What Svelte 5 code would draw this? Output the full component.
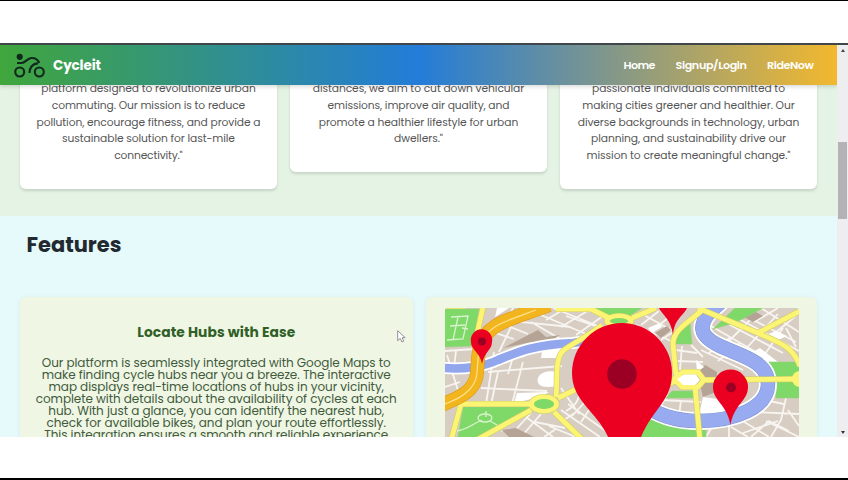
<script>
  const nav = [['Home', 32], ['Signup/Login', 71.5], ['RideNow', 47]];
  const cards = [
    [['platform designed to revolutionize urban', 214.5], ['commuting. Our mission is to reduce', 193.5], ['pollution, encourage fitness, and provide a', 224], ['sustainable solution for last-mile', 173], ['connectivity."', 68.5]],
    [['distances, we aim to cut down vehicular', 211.5], ['emissions, improve air quality, and', 182], ['promote a healthier lifestyle for urban', 199.5], ['dwellers."', 49]],
    [['passionate individuals committed to', 193], ['making cities greener and healthier. Our', 212.5], ['diverse backgrounds in technology, urban', 221.5], ['planning, and sustainability drive our', 195], ['mission to create meaningful change."', 204]]
  ];
  const feature = [
    ['Our platform is seamlessly integrated with Google Maps to', 349],
    ['make finding cycle hubs near you a breeze. The interactive', 349],
    ['map displays real-time locations of hubs in your vicinity,', 335.5],
    ['complete with details about the availability of cycles at each', 361],
    ['hub. With just a glance, you can identify the nearest hub,', 336],
    ['check for available bikes, and plan your route effortlessly.', 339.5],
    ['This integration ensures a smooth and reliable experience', 344]
  ];
  // Spread the letters of a line so it fills the given measure.
  function fit(node, width) {
    const natural = node.getBoundingClientRect().width;
    const n = node.textContent.length;
    const gap = (width - natural) / (n - 1);
    node.style.letterSpacing = gap + 'px';
    node.style.marginRight = -gap + 'px';
  }
</script>

<div class="screen">
  <div class="browser">
    <div class="page">
      <header>
        <svg class="logo" width="34" height="28" viewBox="0 0 34 28" fill="none" stroke="#10291d" stroke-width="2.100">
          <circle cx="6.700" cy="20" r="4.500" /><circle cx="26.300" cy="20" r="4.500" />
          <circle cx="6.700" cy="4.800" r="3.100" fill="#10291d" stroke="none" />
          <path d="M4 11h4.500c4 0 5.500-4.800 10-5 4.500-.1 6.500 1.700 7.700 5M16.500 21c0-5 3-9.700 8.500-9.700" stroke-width="2.200" />
        </svg>
        <b class="brand"><span use:fit={48}>Cycleit</span></b>
        <nav>
          {#each nav as [label, w]}<a href="#top"><span use:fit={w}>{label}</span></a>{/each}
        </nav>
      </header>
      <section class="about">
        {#each cards as lines}
          <article>
            {#each lines as [text, w]}<p><span use:fit={w}>{text}</span></p>{/each}
          </article>
        {/each}
      </section>
      <section class="features">
        <h2><span use:fit={95}>Features</span></h2>
        <div class="row">
          <article class="info">
            <h3><span use:fit={158}>Locate Hubs with Ease</span></h3>
            {#each feature as [text, w]}<p><span use:fit={w}>{text}</span></p>{/each}
          </article>
          <article class="mapcard">
            <svg class="map" width="354" height="140" viewBox="444 308 354 140" fill="none">
              <rect x="443" y="308" width="357" height="140" fill="#d7cdc3" />
              <g stroke="#f8f5f1" stroke-width="1.800">
                <path d="M485 330l28 9M492 320l35 14M510 327l-12 25M512 308l-9 20M497 372l-9 42M444 351l30-2M446 355l13 42M455 351l-3 25M487 372l74-6M480 388l66 3M493 352l-8 52M522 362l-11 42M514 350l-7 24M500 320l70 7M540 315l50 21M530 322l33 19M552 308l55 22M545 320l20-12M560 327l28-17M575 335l27-19M565 316l35 12M444 387l15-5M470 361l54-5" />
                <path d="M635 325l37 17M643 315l29 16M640 325l18-14M650 332l18-15M660 340l12-8M675 350l21 3M676 361l26 1M681 346l-2 24M690 345l12 12M708 353l22-16M717 361l22-18M700 350l42 20M728 341l26-26M740 354l37-40M710 326l50 29M716 318l66 35M735 311l60 31M738 319l60 32M760 308l38 24M774 333l22-18M764 354l18-26M785 328l10 19M753 322l24-14" />
                <path d="M560 410l39 27M560 388l18 26M575 381c5 12 5 22-10 30M575 412l-15 10M585 401l-14 15M590 407l-10 15M567 404l42 30M548 426l27 11M530 413l-22 24M525 417l27 20M540 414l-20 23M555 429l-12 8M534 422l30 6" />
                <path d="M660 400l40 2M667 395l-9 13M680 400l-2 17M763 400l20 4M785 398l-5 22-10 17M752 412l46 2M730 427l17 10M740 420l28 17M750 437l18-16 20 10M765 421l33 16M742 433l35-12M787 410l11 16M728 424v16M711 427l-6 10" />
              </g>
              <path d="M502 348l35-18 8 7 14-2-8 5-25 3z M741 316l12-5 9 5-10 6z M654 333l12-7 4 4-10 8z M696 373l8-8 12 7-1 20-13 5z M690 373l8 4-4 5z M501 430l14-2 18 9h-25z" fill="#b5a395" />
              <path d="M541 352l20-4-5 10h-16z M556 372v14c-16 3-21-2-19-8 2-6 11-8 19-6z M516 393l32-1-9 5-26 6z M742 357l17-9 18 14-20 1z M765 335l10-4 11 5-11 5z M702 397l22 3 18 7-12 6-32 2z M647 328l12-5 2 4-10 6z M695 360l8 7-7 5z M496 308h12l-14 9z" fill="#fff" />
              <path d="M443 309h35l-6 37-29 1zM462 407h68l-53 30-22 11zM593 308h48l-23 15zM689 322l2 22h-17l4-12zM712 329l22-21h28l-28 15zM757 362h42v36h-24l-5-23zM647 416l12 5 35 7 2 20h-64zM671 391h24v7h-30zM690 430h15v18h-15z" fill="#7ed968" stroke="#9fcf87" stroke-width=".6" />
              <g stroke="#d8f3cd" stroke-width="1.300">
                <path d="M450 317l17-1-5 23-16 1M457 317l-5 23M449 326l15-1M461 328l6 1M485 411v6M481 420c-10 4-13 9-25 11M489 421c8 4 12 7 12 11" />
                <ellipse cx="484" cy="418" rx="7" ry="4" />
              </g>
              <path d="M443 368c21 2 41-2 54-8 20-8 35-15 75-17l20-3" stroke="#fff" stroke-width="12" />
              <path d="M443 368c21 2 41-2 54-8 20-8 35-15 75-17l20-3" stroke="#92a6ed" stroke-width="8.500" />
              <path d="M640 403c17 12 33 18 58 18 35 0 69-13 69-37 0-23-27-28-48-38-17-8-20-16-16-25 3-8 10-12 18-20" stroke="#fff" stroke-width="18" />
              <path d="M640 403c17 12 33 18 58 18 35 0 69-13 69-37 0-23-27-28-48-38-17-8-20-16-16-25 3-8 10-12 18-20" stroke="#7e93cc" stroke-width="14.500" />
              <path d="M640 403c17 12 33 18 58 18 35 0 69-13 69-37 0-23-27-28-48-38-17-8-20-16-16-25 3-8 10-12 18-20" stroke="#98abf1" stroke-width="13.500" />
              {#each [['#d3cd68', 6], ['#fbf573', 4.8]] as [color, width]}
                <g stroke={color} stroke-width={width} stroke-linejoin="round">
                  <path d="M482 307l-9 41M460 404h70M460 404l-12 44M530 410l-58 32M555 397c2-17-2-39 8-47 12-9 25-14 38-25M557 398l25-12M553 412l31 30M555 309h35l20 10M631 318l24-10M700 311c-14 13-28 19-28 33l3 31M673 379l9-7h15l6 8-6 7h-16zM694 386l5 55M675 381l-16 6M702 380l97-1M697 308l60 25c24 11 34 13 42 33M757 333l42-22M444 306h20" />
                  <ellipse cx="543" cy="404" rx="12.500" ry="7" /><ellipse cx="618" cy="321" rx="12" ry="5" />
                </g>
              {/each}
              <path d="M676 379l7-4.500h12l4 5.500-5 5h-12z" fill="#fff" />
              <ellipse cx="543" cy="404" rx="10" ry="5" fill="#7ed968" /><ellipse cx="618" cy="321" rx="9" ry="3" fill="#7ed968" />
              <circle cx="799" cy="379" r="8" fill="#fbf573" />
              <path d="M548 305c-36 14-63 17-69 42-5 20 1 31-11 43-7 7-15 9-27 15" stroke="#dc9a19" stroke-width="14" />
              <path d="M548 305c-36 14-63 17-69 42-5 20 1 31-11 43-7 7-15 9-27 15" stroke="#f3b51e" stroke-width="12.800" />
              <path d="M535 310c-30 11-51 16-56 37-5 20 1 31-11 43-7 7-12 9-24 14" stroke="#ffe08b" stroke-width="1.200" />
              <g fill="#ec0022">
                <path d="M470 342a10.700 10.700 0 1 1 21 0c0 8-8 10-10 22-2-12-11-14-11-22zM571 373a50 50 0 1 1 100 0c0 31-23 36-35 75h-25c-9-35-40-43-40-75zM658 308h28c-3 7-13 11-14 27-2-16-10-19-14-27zM712 387a17.500 17.500 0 1 1 35 0c0 14-14 17-17.500 38-3.500-21-17.500-24-17.500-38z" />
              </g>
              <g fill="#9b0024"><circle cx="481" cy="341.500" r="4" /><circle cx="621" cy="374" r="14.800" /><circle cx="730" cy="387.500" r="5" /></g>
            </svg>
          </article>
        </div>
      </section>
    </div>
    <aside><i class="up"></i><i class="thumb"></i><i class="down"></i></aside>
    <svg class="pointer" width="9" height="14" viewBox="0 0 9 14"><path d="M.7.7v10l2.500-2.300 1.700 3.600 1.800-.8L5.200 7.700h3z" fill="#fff" stroke="#77747d" stroke-width=".8" /></svg>
  </div>
</div>

<style>
  :global(body) { margin: 0; background: #fff; }
  .screen { box-sizing: border-box; width: 848px; height: 480px; overflow: hidden; border-top: 1px solid #000; border-bottom: 2px solid #000; background: #fff; padding-top: 42px; font-family: Poppins, Inter, "Open Sans", sans-serif; font-feature-settings: "cv11"; }
  .browser { position: relative; box-sizing: border-box; height: 394px; border-top: 2px solid #41464b; display: flex; overflow: hidden; }
  .page { width: 837px; height: 392px; overflow: hidden; position: relative; background: #e6f9fb; }
  span { display: inline-block; white-space: nowrap; }
  header { position: absolute; z-index: 2; top: 0; left: 0; width: 837px; height: 40px; box-sizing: border-box; padding: 0 23px 0 13px; display: flex; align-items: center; background: linear-gradient(90deg, #40a63c, #237cd8 50%, #f2b82e); box-shadow: 0 2px 4px #0002; color: #fff; }
  .logo { flex: none; margin-top: 1px; }
  .brand { font-size: 13.500px; margin-left: 6px; padding-top: 1px; }
  nav { margin-left: auto; display: flex; gap: 20px; padding-top: 1.500px; }
  nav a { color: #fff; text-decoration: none; font-size: 11.200px; font-weight: 600; }
  .about { box-sizing: border-box; height: 171px; padding: 0 20px; display: flex; align-items: flex-start; justify-content: space-between; background: #e4f3e4; }
  .about article { box-sizing: border-box; width: 257px; background: #fff; border-radius: 0 0 6px 6px; padding: 36px 0 23.700px; box-shadow: 0 1.500px 3px #0002; }
  p { margin: 0; text-align: center; }
  .about p { height: 16.800px; line-height: 16.800px; font-size: 10.700px; color: #555; }
  .features { padding: 0 20px; }
  h2 { margin: 0 0 0 6.500px; padding-top: 16px; height: 65px; font-size: 21px; line-height: 26px; font-weight: 700; color: #222931; }
  .row { display: flex; justify-content: space-between; }
  .row article { box-sizing: border-box; height: 200px; background: #eff7e4; border-radius: 6px; box-shadow: 0 1px 4px #558b6a1c; }
  .info { width: 392.500px; }
  h3 { margin: 0; padding-top: 26px; height: 34.200px; line-height: 20px; text-align: center; font-size: 13.800px; font-weight: 700; color: #305f27; }
  .info p { height: 12px; line-height: 12px; font-size: 12px; color: #425a3c; }
  .mapcard { width: 391px; padding: 11px 0 0 18.500px; }
  .map { display: block; border-radius: 3px 3px 0 0; }
  aside { width: 11px; height: 392px; background: #eeedef; display: flex; flex-direction: column; align-items: center; }
  aside i { flex: none; }
  .up { margin-top: 4px; border: 2.500px solid transparent; border-top: 0; border-bottom: 3px solid #444; }
  .thumb { margin-top: 90px; width: 9px; height: 77px; background: #b4b2b4; }
  .down { margin: auto 0 3px; border: 2.500px solid transparent; border-bottom: 0; border-top: 3px solid #333; }
  .pointer { position: absolute; left: 397px; top: 285px; }
</style>
